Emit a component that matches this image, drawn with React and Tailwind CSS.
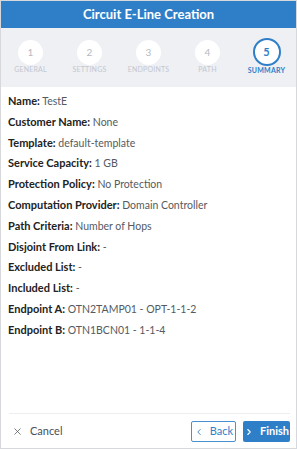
import { X, ChevronLeft, ChevronRight } from 'lucide-react';

const steps = [
  { n: 1, label: 'GENERAL' },
  { n: 2, label: 'SETTINGS' },
  { n: 3, label: 'ENDPOINTS' },
  { n: 4, label: 'PATH' },
  { n: 5, label: 'SUMMARY', active: true },
];

const rows = [
  ['Name', 'TestE'],
  ['Customer Name', 'None'],
  ['Template', 'default-template'],
  ['Service Capacity', '1 GB'],
  ['Protection Policy', 'No Protection'],
  ['Computation Provider', 'Domain Controller'],
  ['Path Criteria', 'Number of Hops'],
  ['Disjoint From Link', '-'],
  ['Excluded List', '-'],
  ['Included List', '-'],
  ['Endpoint A', 'OTN2TAMP01 - OPT-1-1-2'],
  ['Endpoint B', 'OTN1BCN01 - 1-1-4'],
];

export default function App() {
  return (
    <div
      className="w-[297px] h-[449px] flex flex-col bg-white border border-[#d6d8dc] overflow-hidden"
      style={{ fontFamily: 'Lato, "Noto Sans", sans-serif' }}
    >
      <div className="h-[27px] shrink-0 bg-[#2f7fc8] flex items-center justify-center text-white text-[13px] font-bold">
        Circuit E-Line Creation
      </div>

      <div className="h-[59px] shrink-0 bg-[#eef0f4] grid grid-cols-5 pt-[10px]">
        {steps.map(s => (
          <div key={s.n} className="flex flex-col items-center">
            <div className="h-[28px] flex items-center justify-center">
              {s.active ? (
                <div className="w-[28px] h-[28px] rounded-full bg-white border-2 border-[#2f7fc8] flex items-center justify-center text-[#2f7fc8] text-[11px] font-bold">
                  {s.n}
                </div>
              ) : (
                <div className="w-[25px] h-[25px] rounded-full bg-white flex items-center justify-center text-[#b4b9c1] text-[10px]">
                  {s.n}
                </div>
              )}
            </div>
            <div className={`mt-[-1px] text-[7px] leading-[8px] tracking-[0.2px] ${s.active ? 'mt-[0px] text-[#2f7fc8] font-bold' : 'text-[#c3c7ce]'}`}>
              {s.label}
            </div>
          </div>
        ))}
      </div>

      <div className="flex-1 pt-[4px] px-[7px]">
        {rows.map(([k, v]) => (
          <div key={k} className="text-[10.5px] leading-[20.8px] text-[#555a60]">
            <span className="text-[11px] font-bold text-[#222]">{k}:</span> {v}
          </div>
        ))}
      </div>

      <div className="ml-[8px] mr-[6px] border-t border-[#eceef1] h-[35px] shrink-0 flex items-center justify-between pt-[1px]">
        <button className="flex items-center gap-[7px] text-[11px] text-[#4a4f55] pl-[3px]">
          <X size={11} strokeWidth={1.6} />
          Cancel
        </button>
        <div className="flex items-center gap-[7px]">
          <button className="h-[21px] w-[45px] flex items-center justify-center gap-[6px] border border-[#4a90d0] rounded-[2px] text-[#2f7fc8] text-[11px]">
            <ChevronLeft size={10} strokeWidth={2.2} />
            Back
          </button>
          <button className="h-[21px] w-[47px] flex items-center justify-center gap-[6px] bg-[#2f7fc8] rounded-[2px] text-white text-[11px] font-bold">
            <ChevronRight size={10} strokeWidth={2.6} />
            Finish
          </button>
        </div>
      </div>
    </div>
  );
}
